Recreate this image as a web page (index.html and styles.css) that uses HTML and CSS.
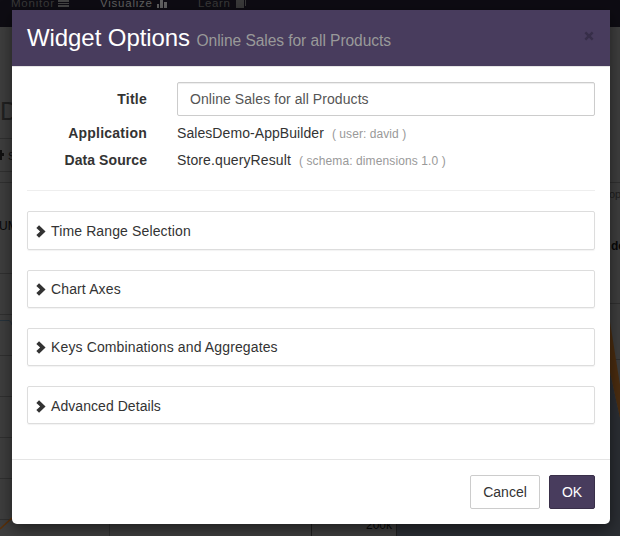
FILE: index.html
```html
<!DOCTYPE html>
<html lang="en">
<head>
<meta charset="utf-8">
<title>Widget Options</title>
<link rel="stylesheet" href="styles.css">
</head>
<body>
<svg class="backdrop" width="620" height="536" viewBox="0 0 620 536" aria-hidden="true">
  <rect width="620" height="536" fill="#3e3e3e"/>
  <rect width="620" height="27" fill="#0e0c13"/>
  <g class="nav-text">
    <text x="11" y="7" fill="#393939" textLength="43">Monitor</text>
    <text x="100" y="7" fill="#606060" textLength="52">Visualize</text>
    <text x="198" y="7" fill="#393939" textLength="32">Learn</text>
  </g>
  <path d="M58 0h11v2H58zM58 3h11v1H58zM58 5h11v2H58z" fill="#444"/>
  <path d="M157 4h2v4h-2zM160 0h3v8h-3zM164 2h3v6h-3z" fill="#606060"/>
  <path d="M236 0h8v8h-8zM245 0h1v6h-1z" fill="#393939"/>
  <g stroke="#303030" fill="none">
    <path d="M0 138.500H12M0 171.500H12M0 182.500H12M0 273.500H12M0 314.500H12M0 355.500H12M0 396.500H12M0 437.500H12M0 478.500H12M0 519.500H120M109.500 519V536M610 182.500h10M610 303.500h10M610 359.500h10"/>
  </g>
  <path d="M0 320.500H9Q11 321 12 325" fill="none" stroke="#26323b"/>
  <path d="M0 529L12 518" fill="none" stroke="#5b3008" stroke-width="1.500"/>
  <text class="bg-text" x="0" y="120" font-size="25" fill="#202020">D</text>
  <path d="M0 150h2v3h2v3h-2v4h-2z" fill="#101010"/>
  <text class="bg-text" x="8" y="160" font-size="11" fill="#101010">S</text>
  <text class="bg-text" x="-1" y="230" font-size="12" fill="#080808">UM</text>
  <text class="bg-text" x="609" y="198" font-size="11" fill="#202020">op</text>
  <text class="bg-text bold" x="611" y="250" font-size="12" fill="#080808">de</text>
  <path d="M396 310H610V372L620 418V536H396z" fill="#2b2e33"/>
  <path d="M610 322L620 385V418L610 372z" fill="#4b2d10"/>
  <path d="M396.500 524V536M311.500 524V536" stroke="#202020"/>
  <text class="bg-text" x="366" y="529" font-size="12" fill="#080808">200k</text>
</svg>

<main class="modal" role="dialog">
  <header class="modal-header">
    <h1>Widget Options <small>Online Sales for all Products</small></h1>
    <svg class="close" width="10" height="10" viewBox="0 0 10 10"><path d="M2.200 0.500L5 3.200 7.800 0.500 9.500 2.200 6.800 5 9.500 7.800 7.800 9.500 5 6.800 2.200 9.500 0.500 7.800 3.200 5 0.500 2.200z" fill="#372e49"/></svg>
  </header>
  <section class="modal-body">
    <div class="details">
      <label for="title">Title</label>
      <input id="title" type="text" value="Online Sales for all Products">
      <b class="application">Application</b>
      <p>SalesDemo-AppBuilder <small>( user: david )</small></p>
      <b>Data Source</b>
      <p class="source">Store.queryResult <small>( schema: dimensions 1.0 )</small></p>
    </div>
    <hr>
    <div class="panels">
      <div class="panel"><svg class="chevron" viewBox="0 0 9 12"><path d="M2.700 0.300L8.700 6 2.700 11.700 0.200 9.300 3.700 6 0.200 2.700z"/></svg>Time Range Selection</div>
      <div class="panel"><svg class="chevron" viewBox="0 0 9 12"><path d="M2.700 0.300L8.700 6 2.700 11.700 0.200 9.300 3.700 6 0.200 2.700z"/></svg>Chart Axes</div>
      <div class="panel"><svg class="chevron" viewBox="0 0 9 12"><path d="M2.700 0.300L8.700 6 2.700 11.700 0.200 9.300 3.700 6 0.200 2.700z"/></svg>Keys Combinations and Aggregates</div>
      <div class="panel"><svg class="chevron" viewBox="0 0 9 12"><path d="M2.700 0.300L8.700 6 2.700 11.700 0.200 9.300 3.700 6 0.200 2.700z"/></svg>Advanced Details</div>
    </div>
  </section>
  <footer class="modal-footer">
    <button class="btn">Cancel</button>
    <button class="btn primary">OK</button>
  </footer>
</main>
</body>
</html>
```
FILE: styles.css
```css
* {
  box-sizing: border-box;
}

body {
  margin: 0;
  width: 620px;
  height: 536px;
  overflow: hidden;
  padding: 10px 10px 0 12px;
  font: 14px/20px "Nimbus Sans", "Liberation Sans", sans-serif;
  color: #333;
}

.backdrop {
  position: absolute;
  left: 0;
  top: 0;
}

.bg-text,
.nav-text {
  font-family: "Liberation Sans", sans-serif;
}

.nav-text {
  font-size: 11.5px;
}

.bold {
  font-weight: bold;
}

.modal {
  position: relative;
  display: flex;
  flex-direction: column;
  width: 598px;
  height: 514px;
  background: #fff;
  border-radius: 0 0 5px 5px;
  box-shadow: 0 5px 15px rgba(0, 0, 0, 0.5);
}

.modal-header {
  display: flex;
  justify-content: space-between;
  height: 57px;
  padding: 15px 16px 0 15px;
  background: #483c5d;
  border-bottom: 1px solid #e5e5e5;
}

h1 {
  margin: 0;
  font-size: 24px;
  line-height: 26px;
  font-weight: normal;
  letter-spacing: -0.08px;
  color: #fff;
  white-space: nowrap;
}

h1 small {
  font-size: 15.6px;
  color: #999;
}

.close {
  margin-top: 6px;
}

.modal-body {
  height: 392px;
  padding: 15px;
}

.details {
  display: grid;
  grid-template-columns: 120px 418px;
  grid-template-rows: 34px 27px 27px;
  column-gap: 30px;
  align-items: center;
  letter-spacing: 0.07px;
}

label,
b {
  text-align: right;
  font-weight: bold;
}

label,
.application {
  letter-spacing: 0.24px;
}

.source {
  letter-spacing: 0.11px;
}

.details b,
.details p {
  padding-top: 7px;
}

input {
  width: 418px;
  height: 34px;
  padding: 6px 12px;
  border: 1px solid #ccc;
  border-radius: 2px;
  box-shadow: inset 0 1px 1px rgba(0, 0, 0, 0.075);
  font: inherit;
  letter-spacing: 0.07px;
  color: #555;
  background: #fff;
}

p {
  margin: 0;
}

p small {
  margin-left: 4px;
  font-size: 12px;
  color: #999;
}

hr {
  margin: 20px 0;
  border: 0;
  border-top: 1px solid #eee;
}

.panels {
  display: grid;
  gap: 20px;
}

.panel {
  display: flex;
  align-items: center;
  height: 38px;
  padding-left: 8px;
  border: 1px solid #ddd;
  border-radius: 2px;
  box-shadow: 0 1px 1px rgba(0, 0, 0, 0.05);
  letter-spacing: 0.13px;
}

.panel:first-child {
  height: 39px;
  padding-top: 1px;
}

.panel:last-child {
  padding-top: 2px;
  letter-spacing: 0.06px;
}

.chevron {
  width: 10px;
  height: 13px;
  margin-right: 5px;
  fill: #333;
}

.modal-footer {
  display: flex;
  justify-content: flex-end;
  gap: 9px;
  padding: 15px;
  border-top: 1px solid #e5e5e5;
}

.btn {
  width: 70px;
  height: 34px;
  padding: 0;
  border: 1px solid #ccc;
  border-radius: 2px;
  background: #fff;
  color: #333;
  font: inherit;
}

.primary {
  width: 46px;
  background: #483c5d;
  border-color: #392f49;
  color: #fff;
}
```
